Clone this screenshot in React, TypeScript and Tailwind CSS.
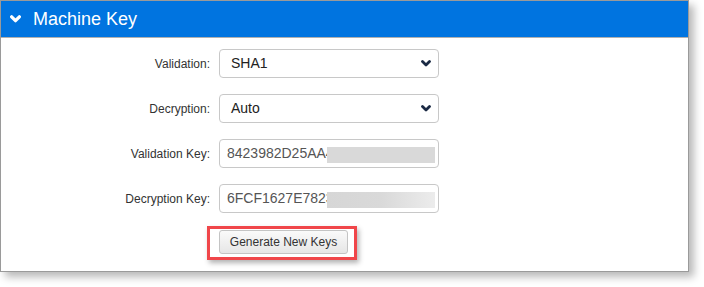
import React from 'react';

const Chevron = ({ className, weight = 2.4 }: { className?: string; weight?: number }) => (
  <svg viewBox="0 0 10 7" className={className} fill="none" stroke="currentColor" strokeWidth={weight} strokeLinecap="round" strokeLinejoin="round">
    <path d="M1.5 1.5 L5 5 L8.5 1.5" />
  </svg>
);

const SelectBox = ({ value }: { value: string }) => (
  <div className="flex h-[29px] items-center justify-between rounded-[4px] border border-[#c8c8c8] bg-white pl-[11px] pr-[7px] text-[14px] text-[#222]">
    <span>{value}</span>
    <Chevron className="h-[7px] w-[10px] text-[#1b2a44]" weight={2.8} />
  </div>
);

const KeyBox = ({ value, fade }: { value: string; fade?: boolean }) => (
  <div className="relative flex h-[29px] items-center overflow-hidden rounded-[4px] border border-[#c8c8c8] bg-white pl-[7px] text-[14px] text-[#555]">
    <span className="whitespace-nowrap">{value}</span>
    {/* redacted part of the key */}
    <div
      className={
        fade
          ? 'absolute left-[107px] top-[7px] h-[16px] w-[108px] bg-gradient-to-r from-[#d6d6d6] via-[#d9d9d9] to-[#ececec]'
          : 'absolute left-[107px] top-[7px] h-[16px] w-[108px] bg-[#d9d9d9]'
      }
    />
  </div>
);

export default function App() {
  return (
    <div className="h-[287px] w-[704px] bg-white font-['Liberation_Sans',Arial,sans-serif]">
      <div className="h-[272px] w-[689px] border border-[#9a9a9a] bg-white shadow-[5px_5px_8px_rgba(0,0,0,0.28)]">
        {/* header */}
        <div className="flex h-[37px] items-center gap-[12px] border-b border-[#b0b0b0] bg-[#0074e0] pl-[9px] text-white">
          <Chevron className="h-[8px] w-[11px] text-white" weight={3} />
          <span className="text-[18px] leading-none">Machine Key</span>
        </div>

        {/* form */}
        <div className="grid grid-cols-[209px_220px] items-center gap-x-[9px] gap-y-[16px] pt-[11px] text-[12px] text-[#333]">
          <span className="text-right">Validation:</span>
          <SelectBox value="SHA1" />
          <span className="text-right">Decryption:</span>
          <SelectBox value="Auto" />
          <span className="text-right">Validation Key:</span>
          <KeyBox value="8423982D25AA4" />
          <span className="text-right">Decryption Key:</span>
          <KeyBox value="6FCF1627E7823" fade />
        </div>

        <div className="ml-[206px] mt-[13px] inline-flex border-[3px] border-[#f0464a] pb-[3px] pl-[9px] pr-[6px] pt-[1px] shadow-[2px_3px_5px_rgba(0,0,0,0.3)]">
          <button className="h-[24px] w-[129px] rounded-[3px] border border-[#c4c4c4] bg-gradient-to-b from-[#fafafa] to-[#e6e6e6] text-[12px] text-[#333]">
            Generate New Keys
          </button>
        </div>
      </div>
    </div>
  );
}
